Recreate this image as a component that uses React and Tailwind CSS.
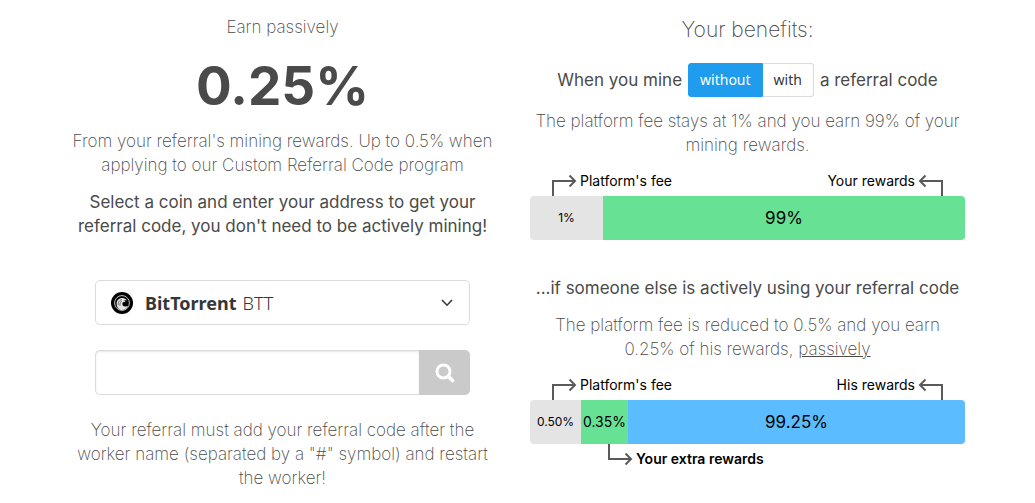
import { useState } from 'react';

const COINS = [{ name: 'BitTorrent', symbol: 'BTT' }];

/* Elbow arrow between a bar segment and its label */
function Elbow({ className }) {
  return (
    <svg className={className} width="26" height="22" viewBox="0 0 26 22" fill="none" stroke="#5a5a5a" strokeWidth="2" aria-hidden="true">
      <path d="M2 22V7H24" />
      <path d="M18.5 1.5L24 7L18.5 12.5" />
    </svg>
  );
}

function CoinLogo() {
  return (
    <svg className="shrink-0" width="22" height="22" viewBox="0 0 22 22" fill="none" aria-hidden="true">
      <circle cx="11" cy="11" r="11" fill="#000" />
      <circle cx="11" cy="11" r="7.4" stroke="#c4c4c4" strokeWidth="1" />
      {/* wave */}
      <path d="M5.6 12C5.4 8.6 8 6 11.2 6C13.4 6 15.2 7 16 8.6C14.8 8 13.6 8 12.8 8.6C13.6 8.8 14.2 9.4 14.4 10.2C13.2 9.6 11.8 10 11.4 11.2C11 12.8 12.2 14.4 14 14.6C15.2 14.7 16.2 14.4 17 13.8C16 16.4 13.8 18 11 18C8 18 5.8 15.4 5.6 12Z" fill="#e4e4e4" />
      <path d="M7.2 13C7 10.4 8.4 8.2 10.8 7.4M9 14C8.6 11.6 9.4 9.8 11 8.8" stroke="#444" strokeWidth="0.7" />
    </svg>
  );
}

function CoinSelect({ coin, onChange }) {
  return (
    <div className="relative flex h-[45px] items-center rounded-[5px] border border-[#dbdbdb] bg-white px-[15px] font-['Noto_Sans',sans-serif] text-[18px] text-[#363636]">
      <CoinLogo />
      <span className="ml-3 font-bold" aria-hidden="true">{coin.name}</span>
      <span className="ml-1.5 font-light" aria-hidden="true">{coin.symbol}</span>
      <svg className="ml-auto" width="14" height="8" viewBox="0 0 14 8" fill="none" stroke="#363636" strokeWidth="1.6" aria-hidden="true">
        <path d="M2 1L7 6.2L12 1" />
      </svg>
      <select
        aria-label="Coin"
        className="absolute inset-0 size-full cursor-pointer opacity-0"
        value={coin.symbol}
        onChange={(e) => onChange(COINS.find((c) => c.symbol === e.target.value))}
      >
        {COINS.map((c) => (
          <option key={c.symbol} value={c.symbol}>{c.name} {c.symbol}</option>
        ))}
      </select>
    </div>
  );
}

function BarLabels({ left, right }) {
  return (
    <div className="flex h-[22px] items-start justify-between px-[21px] text-[14px] leading-[14px] text-black">
      <div className="flex gap-[3px]">
        <Elbow />
        <span>{left}</span>
      </div>
      <div className="flex gap-[3px]">
        <span>{right}</span>
        <Elbow className="-scale-x-100" />
      </div>
    </div>
  );
}

export default function App() {
  const [coin, setCoin] = useState(COINS[0]);
  const [address, setAddress] = useState('');
  const [withCode, setWithCode] = useState(false);

  return (
    <main className="bg-white pr-[5px] font-[Inter,sans-serif] text-[17px] leading-6 text-[#4a4a4a]">
      <div className="mx-auto grid max-w-[930px] grid-cols-2 text-center">
        {/* Referral lookup */}
        <section className="px-[15px] pt-[15px]">
          <p className="font-extralight">Earn passively</p>
          <p className="mt-3 text-[53px] leading-[70px] font-bold">0.25%</p>
          <p className="mt-2 font-extralight">
            From your referral's mining rewards. Up to 0.5% when applying to our Custom Referral Code program
          </p>
          <p className="mt-[13px]">
            Select a coin and enter your address to get your referral code, you don't need to be actively mining!
          </p>

          <form className="mx-[30px] mt-[42px]" onSubmit={(e) => e.preventDefault()}>
            <CoinSelect coin={coin} onChange={setCoin} />
            <div className="mt-[25px] flex h-[45px]">
              <input
                type="text"
                aria-label="Address"
                value={address}
                onChange={(e) => setAddress(e.target.value)}
                className="min-w-0 flex-1 rounded-l-[5px] border border-r-0 border-[#dbdbdb] px-3 shadow-[inset_0_1px_2px_rgba(10,10,10,0.1)] outline-none"
              />
              <button type="submit" aria-label="Search" className="flex w-[51px] items-center justify-center rounded-r-[5px] bg-[#cacaca]">
                <svg width="20" height="20" viewBox="0 0 20 20" fill="none" stroke="#fff" strokeWidth="3" strokeLinecap="round">
                  <circle cx="8.5" cy="8.5" r="6.5" />
                  <path d="M13.5 13.5L17.5 17.5" strokeWidth="3.6" />
                </svg>
              </button>
            </div>
          </form>

          <p className="mt-[23px] font-extralight">
            Your referral must add your referral code after the worker name (separated by a "#" symbol) and restart the worker!
          </p>
        </section>

        {/* Benefits */}
        <section className="px-[15px] pt-[15px]">
          <h2 className="text-[21px] leading-[30px] font-extralight">Your benefits:</h2>
          <div className="mt-[18px] flex items-center justify-center gap-1.5">
            <span>When you mine</span>
            <div className="flex h-[34px] font-['Noto_Sans',sans-serif] text-[14px]">
              <button
                type="button"
                aria-pressed={!withCode}
                onClick={() => setWithCode(false)}
                className="rounded-l-[3px] border border-[#209cee] bg-[#209cee] px-[11px] text-white"
              >
                without
              </button>
              <button
                type="button"
                aria-pressed={withCode}
                onClick={() => setWithCode(true)}
                className="rounded-r-[3px] border border-l-0 border-[#dbdbdb] bg-white px-[11px] text-[#363636]"
              >
                with
              </button>
            </div>
            <span>a referral code</span>
          </div>
          <p className="mt-3 mb-[17px] font-extralight">
            The platform fee stays at 1% and you earn 99% of your mining rewards.
          </p>
          <BarLabels left="Platform's fee" right="Your rewards" />
          <div className="flex h-11 items-center overflow-hidden rounded-[4px] leading-[44px] text-black">
            <div className="w-[73px] bg-[#e4e4e4] text-[12px]">1%</div>
            <div className="flex-1 bg-[#67e194]">99%</div>
          </div>

          <p className="mt-9">...if someone else is actively using your referral code</p>
          <p className="mx-3 mt-[13px] mb-[17px] font-extralight">
            The platform fee is reduced to 0.5% and you earn 0.25% of his rewards, <u>passively</u>
          </p>
          <BarLabels left="Platform's fee" right="His rewards" />
          <div className="flex h-11 items-center overflow-hidden rounded-[4px] leading-[44px] text-black">
            <div className="w-[51px] bg-[#e4e4e4] text-[12px]">0.50%</div>
            <div className="w-[47px] bg-[#67e194] text-[14px]">0.35%</div>
            <div className="flex-1 bg-[#5bbcff]">99.25%</div>
          </div>
          <div className="flex items-end gap-[3px] pl-[77px] text-[14px] leading-[14px] font-semibold text-black">
            <Elbow className="-scale-y-100" />
            <span>Your extra rewards</span>
          </div>
        </section>
      </div>
    </main>
  );
}
